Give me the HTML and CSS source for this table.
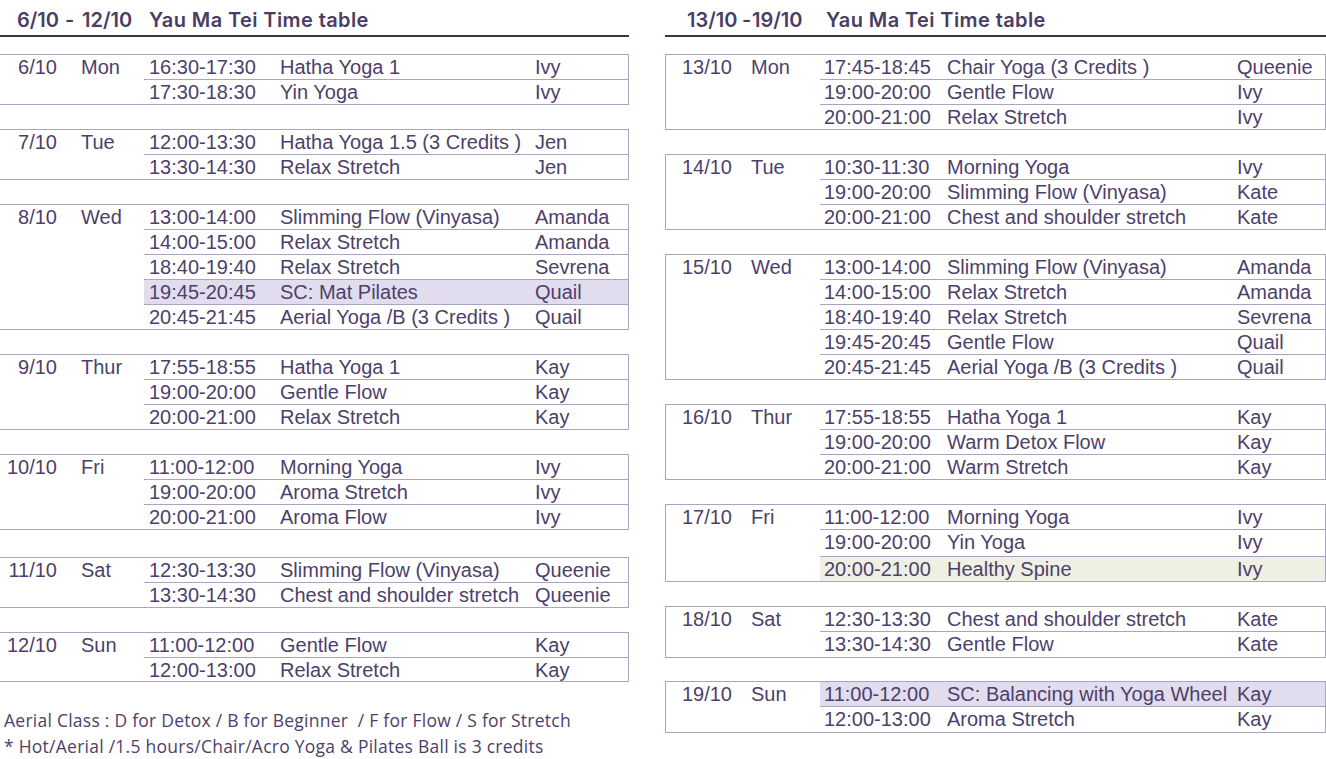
FILE: index.html
```html
<!DOCTYPE html>
<html lang="en">
<head>
<meta charset="utf-8">
<title>Yau Ma Tei Time table</title>
<link rel="stylesheet" href="styles.css">
</head>
<body>
<div class="page">
  <section class="panel panel-left">
    <header class="hd">
      <span class="hd-range"><span class="hd-from">6/10</span><span class="hd-dash">-</span><span class="hd-to">12/10</span></span>
      <span class="hd-title">Yau Ma Tei Time table</span>
    </header>
    <div class="days">
      <div class="day">
        <div class="date">6/10</div><div class="wd">Mon</div>
        <div class="sessions">
          <div class="row"><span class="t">16:30-17:30</span><span class="c">Hatha Yoga 1</span><span class="i">Ivy</span></div>
          <div class="row"><span class="t">17:30-18:30</span><span class="c">Yin Yoga</span><span class="i">Ivy</span></div>
        </div>
      </div>
      <div class="day">
        <div class="date">7/10</div><div class="wd">Tue</div>
        <div class="sessions">
          <div class="row"><span class="t">12:00-13:30</span><span class="c">Hatha Yoga 1.5 (3 Credits )</span><span class="i">Jen</span></div>
          <div class="row"><span class="t">13:30-14:30</span><span class="c">Relax Stretch</span><span class="i">Jen</span></div>
        </div>
      </div>
      <div class="day">
        <div class="date">8/10</div><div class="wd">Wed</div>
        <div class="sessions">
          <div class="row"><span class="t">13:00-14:00</span><span class="c">Slimming Flow (Vinyasa)</span><span class="i">Amanda</span></div>
          <div class="row"><span class="t">14:00-15:00</span><span class="c">Relax Stretch</span><span class="i">Amanda</span></div>
          <div class="row"><span class="t">18:40-19:40</span><span class="c">Relax Stretch</span><span class="i">Sevrena</span></div>
          <div class="row hl-purple"><span class="t">19:45-20:45</span><span class="c">SC: Mat Pilates</span><span class="i">Quail</span></div>
          <div class="row"><span class="t">20:45-21:45</span><span class="c">Aerial Yoga /B (3 Credits )</span><span class="i">Quail</span></div>
        </div>
      </div>
      <div class="day">
        <div class="date">9/10</div><div class="wd">Thur</div>
        <div class="sessions">
          <div class="row"><span class="t">17:55-18:55</span><span class="c">Hatha Yoga 1</span><span class="i">Kay</span></div>
          <div class="row"><span class="t">19:00-20:00</span><span class="c">Gentle Flow</span><span class="i">Kay</span></div>
          <div class="row"><span class="t">20:00-21:00</span><span class="c">Relax Stretch</span><span class="i">Kay</span></div>
        </div>
      </div>
      <div class="day">
        <div class="date">10/10</div><div class="wd">Fri</div>
        <div class="sessions">
          <div class="row"><span class="t">11:00-12:00</span><span class="c">Morning Yoga</span><span class="i">Ivy</span></div>
          <div class="row"><span class="t">19:00-20:00</span><span class="c">Aroma Stretch</span><span class="i">Ivy</span></div>
          <div class="row"><span class="t">20:00-21:00</span><span class="c">Aroma Flow</span><span class="i">Ivy</span></div>
        </div>
      </div>
      <div class="day gap-lg">
        <div class="date">11/10</div><div class="wd">Sat</div>
        <div class="sessions">
          <div class="row"><span class="t">12:30-13:30</span><span class="c">Slimming Flow (Vinyasa)</span><span class="i">Queenie</span></div>
          <div class="row"><span class="t">13:30-14:30</span><span class="c">Chest and shoulder stretch</span><span class="i">Queenie</span></div>
        </div>
      </div>
      <div class="day">
        <div class="date">12/10</div><div class="wd">Sun</div>
        <div class="sessions">
          <div class="row"><span class="t">11:00-12:00</span><span class="c">Gentle Flow</span><span class="i">Kay</span></div>
          <div class="row short"><span class="t">12:00-13:00</span><span class="c">Relax Stretch</span><span class="i">Kay</span></div>
        </div>
      </div>
    </div>
    <div class="notes">
      <p>Aerial Class : D for Detox / B for Beginner &nbsp;/ F for Flow / S for Stretch</p>
      <p>* Hot/Aerial /1.5 hours/Chair/Acro Yoga &amp; Pilates Ball is 3 credits</p>
    </div>
  </section>

  <section class="panel panel-right">
    <header class="hd">
      <span class="hd-range"><span class="hd-from">13/10</span><span class="hd-dash">-</span><span class="hd-to">19/10</span></span>
      <span class="hd-title">Yau Ma Tei Time table</span>
    </header>
    <div class="days">
      <div class="day">
        <div class="date">13/10</div><div class="wd">Mon</div>
        <div class="sessions">
          <div class="row"><span class="t">17:45-18:45</span><span class="c">Chair Yoga (3 Credits )</span><span class="i">Queenie</span></div>
          <div class="row"><span class="t">19:00-20:00</span><span class="c">Gentle Flow</span><span class="i">Ivy</span></div>
          <div class="row"><span class="t">20:00-21:00</span><span class="c">Relax Stretch</span><span class="i">Ivy</span></div>
        </div>
      </div>
      <div class="day">
        <div class="date">14/10</div><div class="wd">Tue</div>
        <div class="sessions">
          <div class="row"><span class="t">10:30-11:30</span><span class="c">Morning Yoga</span><span class="i">Ivy</span></div>
          <div class="row"><span class="t">19:00-20:00</span><span class="c">Slimming Flow (Vinyasa)</span><span class="i">Kate</span></div>
          <div class="row"><span class="t">20:00-21:00</span><span class="c">Chest and shoulder stretch</span><span class="i">Kate</span></div>
        </div>
      </div>
      <div class="day">
        <div class="date">15/10</div><div class="wd">Wed</div>
        <div class="sessions">
          <div class="row"><span class="t">13:00-14:00</span><span class="c">Slimming Flow (Vinyasa)</span><span class="i">Amanda</span></div>
          <div class="row"><span class="t">14:00-15:00</span><span class="c">Relax Stretch</span><span class="i">Amanda</span></div>
          <div class="row"><span class="t">18:40-19:40</span><span class="c">Relax Stretch</span><span class="i">Sevrena</span></div>
          <div class="row"><span class="t">19:45-20:45</span><span class="c">Gentle Flow</span><span class="i">Quail</span></div>
          <div class="row"><span class="t">20:45-21:45</span><span class="c">Aerial Yoga /B (3 Credits )</span><span class="i">Quail</span></div>
        </div>
      </div>
      <div class="day">
        <div class="date">16/10</div><div class="wd">Thur</div>
        <div class="sessions">
          <div class="row"><span class="t">17:55-18:55</span><span class="c">Hatha Yoga 1</span><span class="i">Kay</span></div>
          <div class="row"><span class="t">19:00-20:00</span><span class="c">Warm Detox Flow</span><span class="i">Kay</span></div>
          <div class="row"><span class="t">20:00-21:00</span><span class="c">Warm Stretch</span><span class="i">Kay</span></div>
        </div>
      </div>
      <div class="day">
        <div class="date">17/10</div><div class="wd">Fri</div>
        <div class="sessions">
          <div class="row"><span class="t">11:00-12:00</span><span class="c">Morning Yoga</span><span class="i">Ivy</span></div>
          <div class="row taller"><span class="t">19:00-20:00</span><span class="c">Yin Yoga</span><span class="i">Ivy</span></div>
          <div class="row hl-green"><span class="t">20:00-21:00</span><span class="c">Healthy Spine</span><span class="i">Ivy</span></div>
        </div>
      </div>
      <div class="day">
        <div class="date">18/10</div><div class="wd">Sat</div>
        <div class="sessions">
          <div class="row"><span class="t">12:30-13:30</span><span class="c">Chest and shoulder stretch</span><span class="i">Kate</span></div>
          <div class="row tall"><span class="t">13:30-14:30</span><span class="c">Gentle Flow</span><span class="i">Kate</span></div>
        </div>
      </div>
      <div class="day gap-sm">
        <div class="date">19/10</div><div class="wd">Sun</div>
        <div class="sessions">
          <div class="row hl-purple"><span class="t">11:00-12:00</span><span class="c">SC: Balancing with Yoga Wheel</span><span class="i">Kay</span></div>
          <div class="row tall"><span class="t">12:00-13:00</span><span class="c">Aroma Stretch</span><span class="i">Kay</span></div>
        </div>
      </div>
    </div>
  </section>
</div>
</body>
</html>
```

FILE: styles.css
```css
* { box-sizing: border-box; }

html, body {
  margin: 0;
  padding: 0;
  background: #ffffff;
}

body {
  width: 1326px;
  height: 759px;
  overflow: hidden;
  color: #4d3f6b;
  font-family: "Liberation Sans", Arial, sans-serif;
}

.page {
  display: flex;
  gap: 36px;
  align-items: flex-start;
}

.panel-left { width: 629px; }
.panel-right { width: 661px; }

/* heading */
.hd {
  display: flex;
  height: 37px;
  padding-top: 10px;
  border-bottom: 2px solid #3b3444;
  font-family: "Inter", "Lato", sans-serif;
  font-weight: 600;
  font-size: 20px;
  line-height: 21px;
  color: #4a3d63;
  white-space: nowrap;
  font-variant-numeric: proportional-nums;
}

.hd-range { display: flex; }
.hd-title { letter-spacing: 0.4px; }

.panel-left .hd-range { width: 149px; padding-left: 17px; }
.panel-left .hd-from { width: 48px; }
.panel-left .hd-dash { width: 17px; }

.panel-right .hd-range { width: 161px; padding-left: 22px; }
.panel-right .hd-from { width: 55px; }
.panel-right .hd-dash { width: 10px; }

/* day blocks */
.days { margin-top: 17px; }

.day {
  display: flex;
  border-top: 1px solid #aaa3c2;
  border-bottom: 1px solid #aaa3c2;
  border-right: 1px solid #aaa3c2;
  font-size: 20px;
  line-height: 23px;
  white-space: nowrap;
}
.panel-right .day { border-left: 1px solid #aaa3c2; }

.day + .day { margin-top: 24px; }
.day.gap-lg { margin-top: 27px; }
.day.gap-sm { margin-top: 23px; }

.date, .wd { padding-top: 1px; }
.date { text-align: right; }
.panel-left .date { width: 57px; }
.panel-left .wd { width: 87px; padding-left: 24px; }
.panel-right .date { width: 66px; }
.panel-right .wd { width: 88px; padding-left: 19px; }

.sessions {
  flex: 1;
  display: flex;
  flex-direction: column;
}

.row {
  display: flex;
  height: 25px;
  padding-top: 1px;
  border-bottom: 1px solid #aaa3c2;
}
.row:last-child { height: 24px; border-bottom: 0; }
.row.tall { height: 26px; }
.row.tall:last-child { height: 25px; }
.row.taller { height: 27px; }
.row.short:last-child { height: 23px; }

.hl-purple { background: #e1ddee; }
.hl-green { background: #eef0e3; }

.panel-left .t { width: 136px; padding-left: 5px; }
.panel-left .c { width: 255px; }
.panel-right .t { width: 127px; padding-left: 4px; }
.panel-right .c { width: 290px; }

/* notes */
.notes {
  margin-top: 25px;
  padding-left: 4px;
  font-family: "Open Sans", "Lato", sans-serif;
  font-size: 17.5px;
  letter-spacing: 0.25px;
  line-height: 26px;
  color: #4d3f6b;
}
.notes p { margin: 0; white-space: nowrap; }
```
